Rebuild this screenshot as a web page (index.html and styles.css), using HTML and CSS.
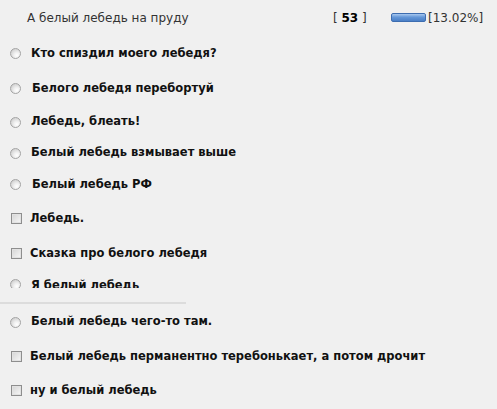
FILE: index.html
```html
<!DOCTYPE html>
<html lang="ru">
<head>
  <meta charset="UTF-8" />
  <meta name="viewport" content="width=device-width, initial-scale=1.0"/>
  <title>Опрос</title>
  <link rel="stylesheet" href="styles.css">
</head>
<body>

  <div class="poll">
    <div class="poll-head">
      <span class="poll-title">А белый лебедь на пруду</span>
      <span class="poll-votes">[ <b>53</b> ]</span>
      <span class="poll-bar"></span>
      <span class="poll-pct">[13.02%]</span>
    </div>

    <ul class="answers">
      <li class="answer"><span class="radio"></span>Кто спиздил моего лебедя?</li>
      <li class="answer"><span class="radio"></span><span class="shift">Белого лебедя перебортуй</span></li>
      <li class="answer answer-mid"><span class="radio"></span>Лебедь, блеать!</li>
      <li class="answer answer-short"><span class="radio"></span>Белый лебедь взмывает выше</li>
      <li class="answer answer-snug"><span class="radio"></span><span class="shift">Белый лебедь РФ</span></li>
      <li class="answer"><span class="check"></span>Лебедь.</li>
      <li class="answer"><span class="check"></span>Сказка про белого лебедя</li>
      <li class="answer answer-cut"><span class="radio"></span><span class="cut-text">Я белый лебедь</span></li>
    </ul>

    <div class="divider"></div>

    <ul class="answers">
      <li class="answer answer-low"><span class="radio"></span>Белый лебедь чего-то там.</li>
      <li class="answer"><span class="check"></span>Белый лебедь перманентно теребонькает, а потом дрочит</li>
      <li class="answer answer-low"><span class="check"></span>ну и белый лебедь</li>
    </ul>
  </div>

</body>
</html>
```

FILE: styles.css
```css
body {
  margin: 0;
  background-color: #f0f0f0;
  font-family: "DejaVu Sans", Verdana, sans-serif;
  color: #000;
}

.poll {
  width: 497px;
}

/* header line: question, votes, bar, percent */
.poll-head {
  display: flex;
  align-items: center;
  height: 35px;
  padding-left: 27px;
}

.poll-title {
  flex: 1;
  font-size: 12px;
  color: #333;
}

.poll-votes {
  width: 58px;
  font-size: 12px;
  color: #333;
}

.poll-votes b {
  color: #000;
}

.poll-bar {
  width: 33px;
  height: 7px;
  margin-right: 2px;
  border: 1px solid #3d6db0;
  border-radius: 2px;
  background: linear-gradient(#a9c8ef, #6497d8 45%, #4a7fc6);
}

.poll-pct {
  width: 69px;
  font-size: 12px;
  color: #333;
}

/* answers */
.answers {
  list-style: none;
  margin: 0;
  padding: 0;
}

.answer {
  display: flex;
  align-items: center;
  height: 35px;
  padding-left: 10px;
  font-size: 11.5px;
  font-weight: bold;
  line-height: 14px;
  color: #111;
}

.answer-mid { height: 32px; }
.answer-short { height: 30px; }
.answer-snug { height: 33px; }
.answer-low { height: 34px; }

.answer-cut {
  height: 18px;
  align-items: flex-end;
  overflow: hidden;
}

.answer-cut .radio {
  margin-bottom: -2px;
}

.cut-text {
  margin-bottom: -4px;
}

.shift {
  margin-left: 1px;
}

.radio {
  flex: none;
  width: 9px;
  height: 9px;
  margin: 2px 10px 0 0;
  border: 1px solid #a4a4a4;
  border-radius: 50%;
  background: radial-gradient(circle at 65% 70%, #ffffff 0, #f2f2f2 30%, #d0d0d0 80%);
}

.check {
  flex: none;
  width: 9px;
  height: 9px;
  margin: 1px 8px 0 1px;
  border: 1px solid #8e8e8e;
  box-shadow: inset 0 0 0 1px #e2e2e2;
  background: linear-gradient(135deg, #d4d4d4, #f8f8f8);
}

.divider {
  width: 186px;
  height: 2px;
  margin-top: 14px;
  background-color: #dcdcdc;
}
```
